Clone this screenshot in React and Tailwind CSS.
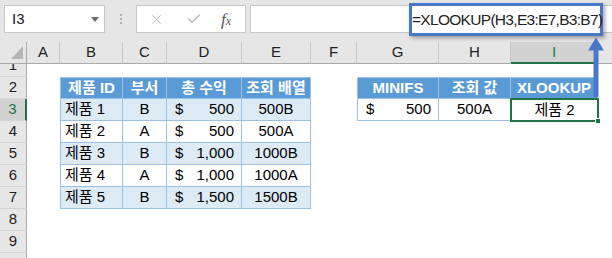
import { X, Check } from "lucide-react";

const font = "font-['Liberation_Sans','Noto_Sans_CJK_KR',sans-serif]";

const cols = [
  ["A", "w-[33px]"],
  ["B", "w-[63px]"],
  ["C", "w-[44px]"],
  ["D", "w-[75px]"],
  ["E", "w-[69px]"],
  ["F", "w-[46px]"],
  ["G", "w-[82px]"],
  ["H", "w-[72px]"],
  ["I", "w-[87px]"],
];

const products = [
  ["제품 1", "B", "500", "500B"],
  ["제품 2", "A", "500", "500A"],
  ["제품 3", "B", "1,000", "1000B"],
  ["제품 4", "A", "1,000", "1000A"],
  ["제품 5", "B", "1,500", "1500B"],
];

const bd = "border-[#9bc2e6]";

function RowHead({ n, active }) {
  return (
    <div
      className={`w-[27px] shrink-0 flex items-center justify-center border-b border-r border-b-[#d4d4d4] ${
        active
          ? "bg-[#d2d2d2] text-[#217346] border-r-2 border-r-[#217346]"
          : "bg-[#e6e6e6] text-[#222] border-r-[#ababab]"
      }`}
    >
      {n}
    </div>
  );
}

function Money({ v }) {
  return (
    <div className="flex w-full justify-between pl-[8px] pr-[7px]">
      <span>$</span>
      <span>{v}</span>
    </div>
  );
}

function TopBar() {
  return (
    <div className="h-[42px] bg-[#e6e6e6] flex items-start pt-[5px] pl-[4px]">
      <div className="w-[101px] h-[28px] bg-white border border-[#c6c6c6] flex items-center justify-between pl-[7px] pr-[5px] text-[15px] text-[#222]">
        <span>I3</span>
        <svg width="8" height="5" viewBox="0 0 8 5">
          <path d="M0 0h8L4 5z" fill="#6b6b6b" />
        </svg>
      </div>
      <div className="w-[31px] h-[28px] flex flex-col items-center justify-center gap-[2px]">
        <span className="w-[2px] h-[2px] bg-[#b0b0b0]" />
        <span className="w-[2px] h-[2px] bg-[#b0b0b0]" />
        <span className="w-[2px] h-[2px] bg-[#b0b0b0]" />
      </div>
      <div className="w-[110px] h-[28px] bg-white border border-[#c6c6c6] flex items-center pl-[12px] text-[#b8b8b8]">
        <X size={15} strokeWidth={1.6} />
        <Check size={16} strokeWidth={2.2} className="ml-[22px]" />
        <span className="ml-[19px] font-['Liberation_Serif',serif] italic text-[#555] text-[17px] leading-none">
          f<span className="text-[12px]">x</span>
        </span>
      </div>
      <div className="ml-[4px] flex-1 h-[28px] bg-white border border-r-0 border-[#c6c6c6]" />
    </div>
  );
}

function ColHeader() {
  return (
    <div className="flex h-[22px] bg-[#e6e6e6] text-[15px] text-[#222]">
      <div className="w-[27px] shrink-0 border-r border-b border-[#ababab] flex items-end justify-end pr-[3px] pb-[4px]">
        <svg width="12" height="13" viewBox="0 0 12 13">
          <path d="M12 0V13H0z" fill="#b4b4b4" />
        </svg>
      </div>
      {cols.map(([c, w]) => (
        <div
          key={c}
          className={`${w} shrink-0 flex items-center justify-center border-r border-r-[#c8c8c8] ${
            c === "I"
              ? "bg-[#d2d2d2] text-[#217346] border-b-2 border-b-[#217346]"
              : "border-b border-b-[#ababab]"
          }`}
        >
          {c}
        </div>
      ))}
      <div className="flex-1 border-b border-[#ababab]" />
    </div>
  );
}

export default function App() {
  return (
    <div className={`w-[612px] h-[258px] overflow-hidden bg-white relative ${font} text-[15px] text-black`}>
      <TopBar />
      <ColHeader />

      {/* row 1, only partly visible */}
      <div className="flex h-[13px]">
        <div className="w-[27px] shrink-0 bg-[#e6e6e6] border-r border-b border-r-[#ababab] border-b-[#d4d4d4] flex flex-col justify-end overflow-hidden">
          <div className="h-[22px] shrink-0 flex items-center justify-center text-[#222]">1</div>
        </div>
      </div>

      {/* row 2: headers */}
      <div className="flex h-[22px]">
        <RowHead n={2} />
        <div className="w-[33px] shrink-0" />
        <div className={`w-[63px] shrink-0 bg-[#5b9bd5] text-white font-bold flex items-center justify-center border ${bd} whitespace-nowrap`}>제품 ID</div>
        <div className={`w-[44px] shrink-0 bg-[#5b9bd5] text-white font-bold flex items-center justify-center border-y border-r ${bd}`}>부서</div>
        <div className={`w-[75px] shrink-0 bg-[#5b9bd5] text-white font-bold flex items-center justify-center border-y border-r ${bd}`}>총 수익</div>
        <div className={`w-[69px] shrink-0 bg-[#5b9bd5] text-white font-bold flex items-center justify-center border-y border-r ${bd} whitespace-nowrap`}>조회 배열</div>
        <div className="w-[46px] shrink-0" />
        <div className={`w-[82px] shrink-0 bg-[#5b9bd5] text-white font-bold flex items-center justify-center border ${bd}`}>MINIFS</div>
        <div className={`w-[72px] shrink-0 bg-[#5b9bd5] text-white font-bold flex items-center justify-center border-y border-r ${bd}`}>조회 값</div>
        <div className={`w-[87px] shrink-0 bg-[#5b9bd5] text-white font-bold flex items-center justify-center border-y border-r ${bd}`}>XLOOKUP</div>
        <div className="flex-1" />
      </div>

      {/* rows 3-7 */}
      {products.map((p, i) => {
        const fill = i % 2 === 0 ? "bg-[#ddebf7]" : "bg-white";
        return (
          <div key={i} className="flex h-[22px]">
            <RowHead n={i + 3} active={i === 0} />
            <div className="w-[33px] shrink-0" />
            <div className={`w-[63px] shrink-0 ${fill} flex items-center pl-[4px] border-x border-b ${bd}`}>{p[0]}</div>
            <div className={`w-[44px] shrink-0 ${fill} flex items-center justify-center border-r border-b ${bd}`}>{p[1]}</div>
            <div className={`w-[75px] shrink-0 ${fill} flex items-center border-r border-b ${bd}`}>
              <Money v={p[2]} />
            </div>
            <div className={`w-[69px] shrink-0 ${fill} flex items-center justify-center border-r border-b ${bd}`}>{p[3]}</div>
            <div className="w-[46px] shrink-0" />
            {i === 0 ? (
              <>
                <div className={`w-[82px] shrink-0 flex items-center border-x border-b ${bd}`}>
                  <Money v="500" />
                </div>
                <div className={`w-[72px] shrink-0 flex items-center justify-center border-r border-b ${bd}`}>500A</div>
                <div className="w-[87px] shrink-0 relative flex items-center justify-center">
                  제품 2
                  <div className="absolute -left-px -top-px -right-[1px] -bottom-[1px] border-2 border-[#217346]" />
                  <div className="absolute -right-[3px] -bottom-[3px] w-[6px] h-[6px] bg-[#217346] border border-white" />
                </div>
              </>
            ) : null}
            <div className="flex-1" />
          </div>
        );
      })}

      {/* rows 8-10 */}
      {[8, 9, ""].map((n, i) => (
        <div key={i} className="flex h-[22px]">
          <RowHead n={n} />
          <div className="flex-1" />
        </div>
      ))}

      {/* formula callout */}
      <div className="absolute left-[409px] top-[3px] w-[194px] h-[33px] border-[3px] border-[#4a78c8] bg-white shadow-[2px_2px_4px_rgba(0,0,0,0.35)] flex items-center text-[15.5px] tracking-[-0.7px] text-[#222] whitespace-nowrap">
        =XLOOKUP(H3,E3:E7,B3:B7)
      </div>

      {/* arrow */}
      <svg className="absolute left-[585px] top-[36px]" width="22" height="64" viewBox="0 0 22 64">
        <path d="M8.5 13h5v48h-5z" fill="#4a78c8" />
        <path d="M3 14.5L11 1.5L19 14.5z" fill="#4a78c8" />
      </svg>
    </div>
  );
}
